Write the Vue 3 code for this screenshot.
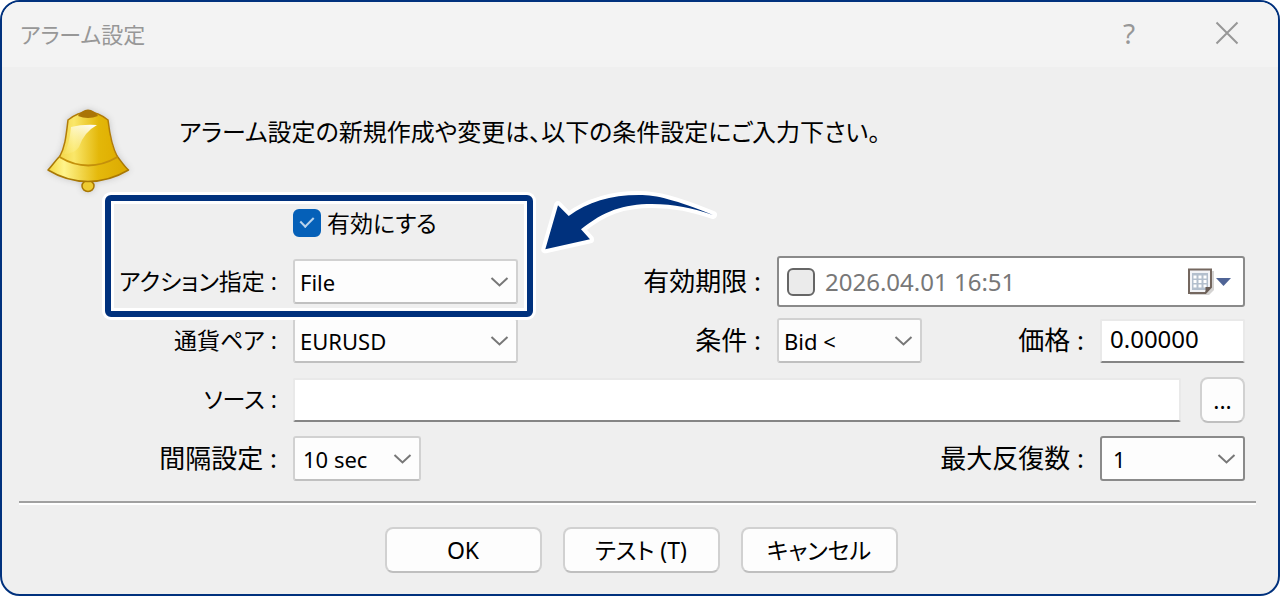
<script setup>
import { ref } from 'vue'

const enabled = ref(true)
const expires = ref(false)
const action = ref('File')
const symbol = ref('EURUSD')
const condition = ref('Bid <')
const interval = ref('10 sec')
const repeats = ref('1')
const expiry = ref('2026.04.01 16:51')
const price = ref('0.00000')
const source = ref('')
</script>

<template>
  <main class="dialog">
    <header class="titlebar">
      <h1>アラーム設定</h1>
      <button type="button" class="caption help" aria-label="ヘルプ">?</button>
      <button type="button" class="caption" aria-label="閉じる">
        <svg width="24" height="24" viewBox="0 0 24 24"><path d="M1.500 1.500L22.500 22.500M22.500 1.500L1.500 22.500" fill="none" stroke="#979797" stroke-width="2" /></svg>
      </button>
    </header>

    <section class="intro">
      <svg class="bell" viewBox="43 106 90 90" aria-hidden="true">
        <defs>
          <linearGradient id="body" x1="0" x2="1">
            <stop offset="0" stop-color="#f3d64a" />
            <stop offset="0.25" stop-color="#fae76a" />
            <stop offset="0.68" stop-color="#e3b709" />
            <stop offset="1" stop-color="#dfae00" />
          </linearGradient>
          <linearGradient id="rim" x1="0" x2="1">
            <stop offset="0" stop-color="#f4d840" />
            <stop offset="0.2" stop-color="#fff48b" />
            <stop offset="0.62" stop-color="#e5b90c" />
            <stop offset="1" stop-color="#dba900" />
          </linearGradient>
          <linearGradient id="shine" x1="0.8" y1="0" x2="0.2" y2="1">
            <stop offset="0" stop-color="#fff" stop-opacity="0.95" />
            <stop offset="1" stop-color="#fff6a0" stop-opacity="0.15" />
          </linearGradient>
        </defs>
        <ellipse cx="88" cy="186" rx="6" ry="5.500" fill="#eecb31" stroke="#a97804" stroke-width="1.500" />
        <path d="M60 156C55 161 52 166 48 170Q67 181.500 88 181.500T128.500 170C124 166 121 161 117 156Q88 169 60 156Z" fill="url(#rim)" stroke="#a97804" stroke-width="1.500" stroke-linejoin="round" />
        <path d="M68 120Q78 112 88 112T108 120C110 137 112 147 117.500 157Q88 175 59.500 157C65 147 66 137 68 120Z" fill="url(#body)" />
        <path d="M59.500 157C65 147 66 137 68 120Q78 112 88 112T108 120C110 137 112 147 117.500 157" fill="none" stroke="#b27c08" stroke-width="1.500" />
        <path d="M59.500 157Q88 174 117.500 157" fill="none" stroke="#c4900b" stroke-width="2" />
        <path d="M71 127Q83 124 97 125Q84 132 79 147Q74 154 64 154C69 145 70 136 71 127Z" fill="url(#shine)" />
        <path d="M78 116Q80 112 85 110Q88 109 91 110Q96 112 98 116Q88 120 78 116Z" fill="#aa7405" />
      </svg>
      <p>アラーム設定の新規作成や変更は、以下の条件設定にご入力下さい。</p>
    </section>

    <form class="form" @submit.prevent>
      <div class="row">
        <span class="label"></span>
        <label class="enable"><input v-model="enabled" type="checkbox" class="check" />有効にする</label>
      </div>

      <div class="row">
        <label class="label kana" for="action">アクション指定 :</label>
        <span class="drop wide">
          <select id="action" v-model="action"><option>File</option></select>
          <svg viewBox="0 0 18 10"><path d="M1 1L9 8.500L17 1" /></svg>
        </span>
        <label class="label" for="expiry">有効期限 :</label>
        <div class="right date">
          <input v-model="expires" type="checkbox" class="check" aria-label="有効期限を使う" />
          <input id="expiry" v-model="expiry" type="text" />
          <button type="button" aria-label="カレンダー">
            <svg width="46" height="30" viewBox="0 0 46 30">
              <path d="M3 4H27V23L22 28H3Z" fill="#b8b6b4" opacity="0.600" />
              <path d="M2 2.500H24V20L18.500 26H2Z" fill="#f2f3f6" stroke="#74675f" stroke-width="2" />
              <rect x="5" y="6" width="16" height="17" fill="#b3bfcd" />
              <path d="M6.500 10H20M6.500 14.500H20M6.500 19H20" stroke="#fff" stroke-width="3" stroke-dasharray="3 2" />
              <path d="M24.500 20H18.500V26.500Z" fill="#685c55" />
              <path d="M29 11H44L36.500 19Z" fill="#4f6496" />
            </svg>
          </button>
        </div>
      </div>

      <div class="row">
        <label class="label kana" for="symbol">通貨ペア :</label>
        <span class="drop wide">
          <select id="symbol" v-model="symbol"><option>EURUSD</option></select>
          <svg viewBox="0 0 18 10"><path d="M1 1L9 8.500L17 1" /></svg>
        </span>
        <label class="label" for="condition">条件 :</label>
        <div class="right">
          <span class="drop small">
            <select id="condition" v-model="condition"><option>Bid &lt;</option></select>
            <svg viewBox="0 0 18 10"><path d="M1 1L9 8.500L17 1" /></svg>
          </span>
          <label class="label" for="price">価格 :</label>
          <input id="price" v-model="price" type="text" class="text small" />
        </div>
      </div>

      <div class="row source">
        <label class="label kana" for="source">ソース :</label>
        <input id="source" v-model="source" type="text" class="text" />
        <button type="button" class="push browse" aria-label="参照">...</button>
      </div>

      <div class="row repeat">
        <label class="label" for="interval">間隔設定 :</label>
        <span class="drop short">
          <select id="interval" v-model="interval"><option>10 sec</option></select>
          <svg viewBox="0 0 18 10"><path d="M1 1L9 8.500L17 1" /></svg>
        </span>
        <label class="label" for="repeats">最大反復数 :</label>
        <span class="drop small strong">
          <select id="repeats" v-model="repeats"><option>1</option></select>
          <svg viewBox="0 0 18 10"><path d="M1 1L9 8.500L17 1" /></svg>
        </span>
      </div>

      <div class="highlight"></div>
      <svg class="arrow" viewBox="538 188 184 68" aria-hidden="true">
        <path d="M713 215C676 200 657 195 639 195C610 195 588 202 568.700 216L558 205.300L545.300 249.300L590 239.300L581 229.300C604 211 623 204 652 204C675 204 692 208 713 215Z" />
      </svg>
    </form>

    <footer class="actions">
      <button type="button" class="push">OK</button>
      <button type="button" class="push">テスト (T)</button>
      <button type="button" class="push">キャンセル</button>
    </footer>
  </main>
</template>

<style>
body {
  background: #fff;
}
</style>

<style scoped>
.dialog,
.dialog * {
  box-sizing: border-box;
}

.dialog {
  min-height: 100vh;
  border: 2px solid #00317d;
  border-radius: 20px;
  background: #efefef;
  overflow: hidden;
  color: #000;
  font-family: "Noto Sans", "Noto Sans CJK JP", sans-serif;
  font-size: 24px;
  line-height: 32px;
  font-feature-settings: "palt";
}

button,
input,
select {
  margin: 0;
  padding: 0;
  font: inherit;
  color: inherit;
  font-feature-settings: inherit;
}

.titlebar {
  display: flex;
  align-items: center;
  height: 65px;
  padding: 0 38px 4px 18px;
  background: #f3f3f3;
  color: #979797;
}

h1 {
  flex: 1;
  margin: 0;
  padding-top: 2px;
  font-size: 22px;
  font-weight: 400;
}

.caption {
  display: flex;
  align-items: center;
  justify-content: center;
  width: 26px;
  height: 32px;
  border: 0;
  background: none;
}

.help {
  margin-right: 72px;
  font-size: 28px;
}

.intro {
  display: flex;
  height: 126px;
  padding: 39px 16px 0 41px;
}

.bell {
  flex: none;
  width: 90px;
  height: 90px;
  margin-right: 46px;
  filter: drop-shadow(0 0 3px #c4c4c4);
}

.intro p {
  margin: 10px 0 0;
  font-size: 24px;
}

.form {
  position: relative;
  margin: 0 22px 0 17px;
  padding-bottom: 13px;
  border-bottom: 2px solid #a0a0a0;
  box-shadow: 0 2px 0 #fff;
}

.row {
  display: grid;
  grid-template-columns: 258px 225px minmax(0, 1fr) 468px;
  column-gap: 16px;
  align-items: center;
  height: 59px;
  padding-right: 11px;
}

.source {
  grid-template-columns: 258px minmax(0, 1fr) 48px;
}

.repeat {
  grid-template-columns: 258px 128px minmax(0, 1fr) 145px;
}

.label {
  padding-bottom: 2px;
  text-align: right;
  white-space: nowrap;
  font-size: 26px;
}

.kana {
  font-size: 23px;
}

.enable {
  display: flex;
  align-items: center;
  gap: 6px;
  white-space: nowrap;
  font-size: 23px;
}

.right {
  display: flex;
  align-items: center;
  gap: 16px;
}

.right .label {
  flex: 1;
}

.check {
  flex: none;
  appearance: none;
  display: grid;
  place-items: center;
  width: 28px;
  height: 28px;
  border: 2px solid #666;
  border-radius: 6px;
  background: #ebebeb;
}

.check:checked {
  border-color: #0560b8;
  background: #0560b8;
}

.check:checked::after {
  content: "";
  width: 6px;
  height: 11px;
  margin-bottom: 4px;
  border: solid #b9d3ec;
  border-width: 0 2px 2px 0;
  transform: rotate(45deg);
}

.drop {
  position: relative;
  display: block;
}

.drop select {
  appearance: none;
  display: block;
  width: 100%;
  height: 45px;
  padding: 0 40px 0 5px;
  border: 2px solid #d1d1d1;
  border-bottom-color: #c0c0c0;
  border-radius: 3px;
  background: #fdfdfd;
  font-size: 22px;
}

.drop svg {
  position: absolute;
  right: 9px;
  top: 18px;
  width: 19px;
  height: 10px;
  fill: none;
  stroke: #777;
  stroke-width: 2;
  pointer-events: none;
}

.small {
  width: 145px;
}

.strong select {
  border-color: #8a8a8a;
  padding-left: 11px;
}

.short select {
  padding-left: 8px;
}

.text {
  height: 44px;
  min-width: 0;
  padding: 0 8px 4px;
  border: 2px solid #e9e9e9;
  border-bottom-color: #858585;
  border-radius: 2px;
  background: #fff;
}

.date {
  gap: 10px;
  height: 51px;
  padding: 0 10px 0 8px;
  border: 2px solid #8a8a8a;
  border-radius: 3px;
  background: #fff;
  color: #787878;
}

.date input[type="text"] {
  flex: 1;
  min-width: 0;
  border: 0;
  background: none;
}

.date button {
  display: flex;
  border: 0;
  background: none;
}

.push {
  width: 157px;
  height: 46px;
  border: 2px solid #d1d1d1;
  border-bottom-color: #bfbfbf;
  border-radius: 8px;
  background: #fdfdfd;
  font-size: 23px;
}

.browse {
  justify-self: end;
  width: 45px;
}

.highlight {
  position: absolute;
  left: 86px;
  top: 2px;
  width: 428px;
  height: 122px;
  border: 6px solid #00317d;
  border-radius: 6px;
  box-shadow: 0 0 0 3px #fff, inset 0 0 0 3px #fff;
  pointer-events: none;
}

.arrow {
  position: absolute;
  left: 519px;
  top: -5px;
  width: 184px;
  height: 68px;
  fill: #00317d;
  stroke: #fff;
  stroke-width: 8;
  stroke-linejoin: round;
  paint-order: stroke;
  pointer-events: none;
}

.actions {
  display: flex;
  justify-content: center;
  gap: 21px;
  padding: 24px 0 21px 2px;
}
</style>
